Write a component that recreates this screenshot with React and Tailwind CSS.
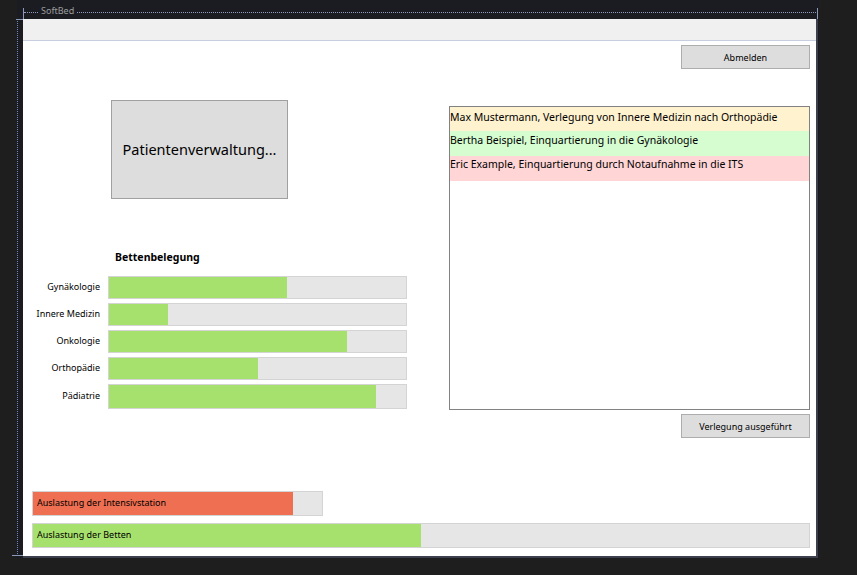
const bars = [
  ["Gynäkologie", 60],
  ["Innere Medizin", 20],
  ["Onkologie", 80],
  ["Orthopädie", 50],
  ["Pädiatrie", 90],
];

function Bar({ value, color, className, children }) {
  return (
    <div className={"relative bg-[#e6e6e6] border border-[#d4d4d4] " + className}>
      <div className="h-full" style={{ width: value + "%", background: color }} />
      {children && (
        <div className="absolute inset-0 flex items-center pl-[4px] pb-[1px] text-[9px] text-black">{children}</div>
      )}
    </div>
  );
}

export default function App() {
  return (
    <div className="relative w-[857px] h-[575px] bg-[#1e1e1e] overflow-hidden font-['Noto_Sans',sans-serif] text-black">
      <div className="flex h-full">
        <div className="w-[17px] shrink-0" />
        <div className="w-[802px] h-[558px] bg-[#1b1c22] pt-[19px] pl-[6px] shrink-0">
          <div className="w-[795px] h-[539px] bg-white border-r-2 border-b-2 border-[#3b404c] flex flex-col">
            <div className="h-[22px] shrink-0 bg-[#f0f0f0] border-b border-[#c6cee0]" />
            <div className="flex-1 flex flex-col">
              <div className="flex justify-end pt-[4px] pr-[6px]">
                <button className="w-[129px] h-[24px] bg-[#dddddd] border border-[#adadad] text-[9px] leading-none">
                  Abmelden
                </button>
              </div>
              <div className="flex">
                <div className="w-[426px] flex flex-col">
                  <button className="ml-[88px] mt-[31px] w-[177px] h-[99px] bg-[#dddddd] border border-[#a0a0a0] text-[14.5px] leading-none">
                    Patientenverwaltung...
                  </button>
                  <div className="ml-[92px] mt-[51px] text-[10.5px] leading-[15px] font-bold">Bettenbelegung</div>
                  <div className="mt-[11px] flex flex-col gap-[4px]">
                    {bars.map(([name, v], i) => (
                      <div key={name} className="flex items-center gap-[8px]">
                        <div className="w-[77px] text-right text-[9px] leading-none pb-[3px]">{name}</div>
                        <Bar
                          value={v}
                          color="#a7e16d"
                          className={"w-[299px] " + (i === 4 ? "h-[25px]" : "h-[23px]")}
                        />
                      </div>
                    ))}
                  </div>
                </div>
                <div className="flex flex-col mt-[37px]">
                  <div className="w-[361px] h-[304px] border border-[#828282] flex flex-col">
                    <div className="h-[24px] bg-[#fff2cf] text-[10.5px] flex items-center pb-[3px]">
                      Max Mustermann, Verlegung von Innere Medizin nach Orthopädie
                    </div>
                    <div className="h-[25px] bg-[#d6fdd0] text-[10.5px] flex items-center pb-[6px]">
                      Bertha Beispiel, Einquartierung in die Gynäkologie
                    </div>
                    <div className="h-[25px] bg-[#ffd5d5] text-[10.5px] flex items-center pb-[8px]">
                      Eric Example, Einquartierung durch Notaufnahme in die ITS
                    </div>
                  </div>
                  <button className="self-end mt-[4px] w-[129px] h-[24px] bg-[#dddddd] border border-[#adadad] text-[9px] leading-none">
                    Verlegung ausgeführt
                  </button>
                </div>
              </div>
              <div className="mt-auto pb-[8px] pl-[9px] flex flex-col gap-[7px]">
                <Bar value={90} color="#ef6f52" className="w-[291px] h-[25px]">
                  Auslastung der Intensivstation
                </Bar>
                <Bar value={50} color="#a7e16d" className="w-[778px] h-[25px]">
                  Auslastung der Betten
                </Bar>
              </div>
            </div>
          </div>
        </div>
      </div>

      {/* designer adornments */}
      <div className="absolute left-[24px] top-[12px] w-[792px] border-t border-dotted border-[#8d9cc0]" />
      <div className="absolute left-[38px] top-[5px] px-[3px] bg-[#1b1c22] text-[9px] leading-[12px] text-[#9c9c9c]">SoftBed</div>
      <div className="absolute left-[17px] top-[19px] h-[537px] border-l border-dotted border-[#6f86c0]" />
      <div className="absolute left-[23px] top-[8px] h-[11px] border-l border-[#8a9ab8]" />
      <div className="absolute left-[817px] top-[8px] h-[11px] border-l border-[#8a9ab8]" />
      <div className="absolute left-[16px] top-[19px] w-[7px] border-t border-[#8a9ab8]" />
      <div className="absolute left-[12px] top-[555px] w-[11px] border-t border-[#8a9ab8]" />
    </div>
  );
}
